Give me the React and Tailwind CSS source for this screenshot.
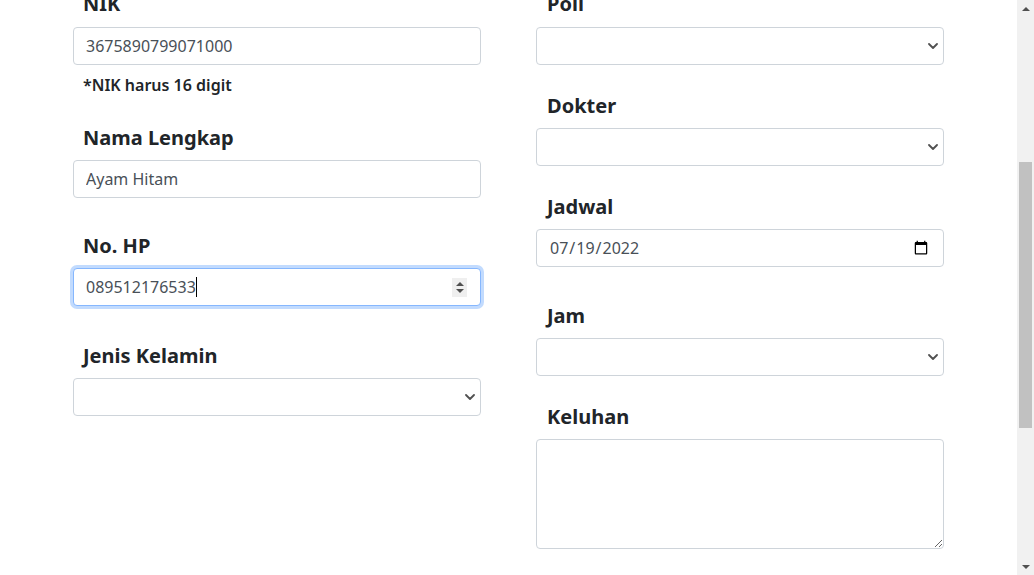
import React from "react";

const font = { fontFamily: '"Noto Sans", "Open Sans", sans-serif' };

function Label({ children, className = "" }) {
  return (
    <div className={`h-6 text-[20px] font-bold leading-6 text-[#212529] ${className}`}>
      {children}
    </div>
  );
}

function Chevron() {
  return (
    <svg width="10" height="6" viewBox="0 0 10 6" className="shrink-0">
      <path d="M1 1l4 4 4-4" fill="none" stroke="#505050" strokeWidth="1.8" strokeLinecap="round" strokeLinejoin="round" />
    </svg>
  );
}

function Select() {
  return (
    <div className="flex h-[38px] items-center justify-end rounded-[4px] border border-[#ced4da] bg-white pr-[5px]">
      <Chevron />
    </div>
  );
}

function TextInput({ value }) {
  return (
    <input
      type="text"
      readOnly
      value={value}
      className="block h-[38px] w-full rounded-[4px] border border-[#ced4da] bg-white px-3 text-base text-[#495057] outline-none"
      style={font}
    />
  );
}

function Scrollbar() {
  return (
    <div className="flex h-full w-[17px] shrink-0 flex-col items-center bg-[#f1f1f1]">
      <div className="flex h-[17px] w-full items-center justify-center">
        <div className="h-0 w-0 border-x-[4px] border-b-[4px] border-x-transparent border-b-[#505050]" />
      </div>
      <div className="mt-[145px] h-[266px] w-[13px] bg-[#c1c1c1]" />
      <div className="flex-1" />
      <div className="flex h-[17px] w-full items-center justify-center">
        <div className="h-0 w-0 border-x-[4px] border-t-[4px] border-x-transparent border-t-[#505050]" />
      </div>
    </div>
  );
}

export default function App() {
  return (
    <div className="flex h-[575px] w-full overflow-hidden bg-white" style={font}>
      <div className="flex flex-1 gap-[55px] pl-[73px]">
        {/* left column */}
        <div className="-mt-[8px] w-[408px]">
          <Label className="px-[10px]">NIK</Label>
          <div className="mt-[11px]">
            <TextInput value="3675890799071000" />
          </div>
          <div className="mt-[8px] h-6 px-[10px] text-[16px] font-semibold leading-6 text-[#212529]">
            *NIK harus 16 digit
          </div>

          <Label className="mt-[29px] px-[10px]">Nama Lengkap</Label>
          <div className="mt-[10px]">
            <TextInput value="Ayam Hitam" />
          </div>

          <Label className="mt-[36px] px-[10px]">No. HP</Label>
          <div className="mt-[10px] flex h-[38px] items-center rounded-[4px] border border-[#86b7fe] bg-white pl-3 pr-[13px] shadow-[0_0_0_3px_rgba(13,110,253,0.25)]">
            <span className="text-base text-[#495057]">089512176533</span>
            <span className="h-[20px] w-px bg-black" />
            <div className="ml-auto flex h-[19px] w-[15px] flex-col items-center justify-center gap-[3px] bg-[#efefef]">
              <div className="h-0 w-0 border-x-[4px] border-b-[4px] border-x-transparent border-b-[#505050]" />
              <div className="h-0 w-0 border-x-[4px] border-t-[4px] border-x-transparent border-t-[#505050]" />
            </div>
          </div>

          <Label className="mt-[38px] px-[10px]">Jenis Kelamin</Label>
          <div className="mt-[10px]">
            <Select />
          </div>
        </div>

        {/* right column */}
        <div className="-mt-[8px] w-[408px]">
          <Label className="px-[11px]">Poli</Label>
          <div className="mt-[11px]">
            <Select />
          </div>

          <Label className="mt-[29px] px-[11px]">Dokter</Label>
          <div className="mt-[10px]">
            <Select />
          </div>

          <Label className="mt-[29px] px-[11px]">Jadwal</Label>
          <div className="mt-[10px]">
            <input
              type="date"
              defaultValue="2022-07-19"
              className="block h-[38px] w-full rounded-[4px] border border-[#ced4da] bg-white px-3 text-base text-[#495057] outline-none"
              style={font}
            />
          </div>

          <Label className="mt-[37px] px-[11px]">Jam</Label>
          <div className="mt-[10px]">
            <Select />
          </div>

          <Label className="mt-[29px] px-[11px]">Keluhan</Label>
          <div className="mt-[10px]">
            <textarea
              readOnly
              className="block h-[110px] w-full rounded-[4px] border border-[#ced4da] bg-white px-3 py-[6px] text-base text-[#495057] outline-none"
              style={font}
            />
          </div>
        </div>
      </div>
      <Scrollbar />
    </div>
  );
}
